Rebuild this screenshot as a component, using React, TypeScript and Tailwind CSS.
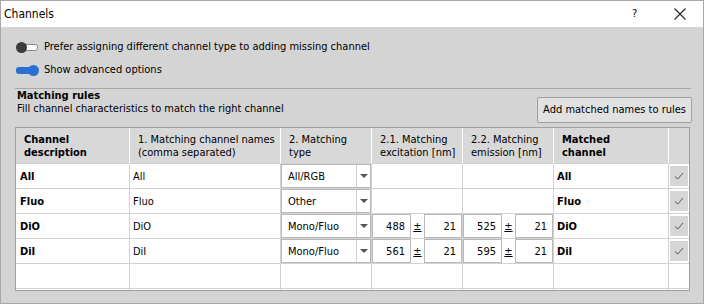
import React from "react";

const font = { fontFamily: '"DejaVu Sans Condensed", "DejaVu Sans", sans-serif' };

function Check() {
  return (
    <div className="w-[18px] h-[20px] bg-[#d6d6d6] flex items-center justify-center">
      <svg width="10" height="8" viewBox="0 0 10 8">
        <path d="M1 4.5 L3.8 7 L9 1" fill="none" stroke="#555" strokeWidth="1" />
      </svg>
    </div>
  );
}

function Combo({ v }: { v: string }) {
  return (
    <div className="h-full w-full flex">
      <div className="flex-1 flex border border-[#b9b9b9] bg-white">
        <div className="flex-1 flex items-center pl-[6px]">{v}</div>
        <div className="w-[14px] border-l border-[#cfcfcf] flex items-center justify-center">
          <svg width="8" height="4" viewBox="0 0 8 4">
            <path d="M0 0 L8 0 L4 4 Z" fill="#555" />
          </svg>
        </div>
      </div>
    </div>
  );
}

function Spin({ a, b }: { a: string; b: string }) {
  return (
    <div className="flex h-full w-full">
      <div className="w-[39px] border border-[#b9b9b9] flex items-center justify-end pr-[5px]">{a}</div>
      <div className="w-[13px] flex items-center justify-center">
        <span className="underline">±</span>
      </div>
      <div className="flex-1 border border-[#b9b9b9] flex items-center justify-end pr-[5px]">{b}</div>
    </div>
  );
}

const cell = "border-r border-b border-[#d2d2d2] flex items-center";

function Row({
  d,
  n,
  t,
  ex,
  em,
  m,
  check = true,
}: {
  d?: string;
  n?: string;
  t?: string;
  ex?: [string, string];
  em?: [string, string];
  m?: string;
  check?: boolean;
}) {
  return (
    <>
      <div className={`${cell} h-[25px] pl-[4px] font-bold`}>{d}</div>
      <div className={`${cell} h-[25px] pl-[3px]`}>{n}</div>
      <div className={`${cell} h-[25px]`}>{t ? <Combo v={t} /> : null}</div>
      <div className={`${cell} h-[25px]`}>{ex ? <Spin a={ex[0]} b={ex[1]} /> : null}</div>
      <div className={`${cell} h-[25px]`}>{em ? <Spin a={em[0]} b={em[1]} /> : null}</div>
      <div className={`${cell} h-[25px] pl-[3px] font-bold`}>{m}</div>
      <div className="border-b border-[#d2d2d2] h-[25px] flex items-center pl-[1px]">{check ? <Check /> : null}</div>
    </>
  );
}

const head = "h-[36px] bg-[#d8d8d8] border-r border-white border-b border-b-[#d2d2d2] flex items-center pl-[8px]";

export default function App() {
  return (
    <div
      className="w-[704px] h-[304px] overflow-hidden bg-[#d4d4d4] text-[11px] text-black border border-[#a8a8a8] flex flex-col"
      style={font}
    >
      <div className="h-[26px] bg-white flex items-center pl-[3px] shrink-0 text-[12px]">
        <span className="flex-1">Channels</span>
        <span className="w-[12px] mr-[30px] text-[11px]">?</span>
        <svg width="12" height="12" viewBox="0 0 12 12" className="mr-[17px]">
          <path d="M0.5 0.5 L11.5 11.5 M11.5 0.5 L0.5 11.5" stroke="#222" strokeWidth="1.1" />
        </svg>
      </div>
      <div className="flex flex-col px-[14px]">
        <div className="flex items-center h-[23px] mt-[9px] pl-[1px]">
          <div className="relative w-[23px] h-[11px] mr-[5px]">
            <div className="absolute left-[9px] top-[2px] w-[13px] h-[7px] bg-white border border-[#8a8a8a] rounded-r-[3px]" />
            <div className="absolute left-0 top-0 w-[11px] h-[11px] rounded-full bg-[#3c3c3c]" />
          </div>
          <span>Prefer assigning different channel type to adding missing channel</span>
        </div>
        <div className="flex items-center h-[23px] pl-[1px]">
          <div className="relative w-[23px] h-[11px] mr-[5px]">
            <div className="absolute left-0 top-[2px] w-[14px] h-[7px] bg-[#2b6fd1] rounded-l-[3px]" />
            <div className="absolute left-[12px] top-0 w-[11px] h-[11px] rounded-full bg-[#2b6fd1]" />
          </div>
          <span>Show advanced options</span>
        </div>
        <div className="h-px bg-[#a8a8a8] mt-[6px] -mr-[2px]" />
        <div className="flex items-start">
          <div className="flex-1 pl-[2px] leading-[13px]">
            <div className="font-bold">Matching rules</div>
            <div>Fill channel characteristics to match the right channel</div>
          </div>
          <div className="h-[26px] px-[5px] flex items-center bg-[#e1e1e1] border border-[#a0a0a0] rounded-[2px] mt-[8px] -mr-[3px]">
            Add matched names to rules
          </div>
        </div>
        <div className="mt-[4px] h-[164px] overflow-hidden border border-[#a0a0a0] bg-white -mr-[1px]">
          <div className="grid grid-cols-[114px_151px_91px_91px_91px_115px_1fr] leading-[13px]">
            <div className={`${head} font-bold`}>
              Channel<br />description
            </div>
            <div className={head}>
              1. Matching channel names<br />(comma separated)
            </div>
            <div className={head}>
              2. Matching<br />type
            </div>
            <div className={head}>
              2.1. Matching<br />excitation [nm]
            </div>
            <div className={head}>
              2.2. Matching<br />emission [nm]
            </div>
            <div className={`${head} font-bold`}>
              Matched<br />channel
            </div>
            <div className="h-[36px] bg-[#d8d8d8] border-b border-b-[#d2d2d2]" />
            <Row d="All" n="All" t="All/RGB" m="All" />
            <Row d="Fluo" n="Fluo" t="Other" m="Fluo" />
            <Row d="DiO" n="DiO" t="Mono/Fluo" ex={["488", "21"]} em={["525", "21"]} m="DiO" />
            <Row d="DiI" n="DiI" t="Mono/Fluo" ex={["561", "21"]} em={["595", "21"]} m="DiI" />
            <Row check={false} />
            <Row check={false} />
          </div>
        </div>
      </div>
    </div>
  );
}
